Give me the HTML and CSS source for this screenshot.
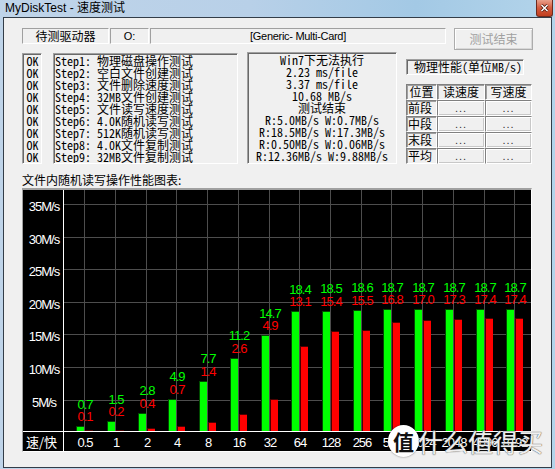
FILE: index.html
```html
<!DOCTYPE html>
<html lang="zh-CN">
<head>
<meta charset="utf-8">
<title>MyDiskTest - 速度测试</title>
<link rel="stylesheet" href="styles.css">
</head>
<body>
<div class="window">
  <div class="titlebar">
    <span class="title">MyDiskTest - 速度测试</span>
    <span class="close"><svg width="9" height="8" viewBox="0 0 9 8"><path d="M1.5 1L7.5 7M7.5 1L1.5 7" stroke="#4a1408" stroke-width="3"/><path d="M1.5 1L7.5 7M7.5 1L1.5 7" stroke="#fff" stroke-width="1.5"/></svg></span>
  </div>
  <div class="client">
    <div class="toprow">
      <div class="static drive">待测驱动器</div>
      <div class="static letter">O:</div>
      <div class="static device">[Generic- Multi-Card]</div>
      <div class="btn">测试结束</div>
    </div>
    <div class="midrow">
      <div class="well oklist">
        <div>OK</div><div>OK</div><div>OK</div><div>OK</div><div>OK</div><div>OK</div><div>OK</div><div>OK</div><div>OK</div>
      </div>
      <div class="well steps">
        <div>Step1: 物理磁盘操作测试</div>
        <div>Step2: 空白文件创建测试</div>
        <div>Step3: 文件删除速度测试</div>
        <div>Step4: 32MB文件创建测试</div>
        <div>Step5: 文件读写速度测试</div>
        <div>Step6: 4.0K随机读写测试</div>
        <div>Step7: 512K随机读写测试</div>
        <div>Step8: 4.0K文件复制测试</div>
        <div>Step9: 32MB文件复制测试</div>
      </div>
      <div class="well results">
        <div>Win7下无法执行</div>
        <div>2.23 ms/file</div>
        <div>3.37 ms/file</div>
        <div>10.68 MB/s</div>
        <div>测试结束</div>
        <div>R:5.0MB/s W:0.7MB/s</div>
        <div>R:18.5MB/s W:17.3MB/s</div>
        <div>R:0.50MB/s W:0.06MB/s</div>
        <div>R:12.36MB/s W:9.88MB/s</div>
      </div>
      <div class="perf">
        <div class="perfcap">物理性能(单位MB/s)</div>
        <div class="ptable">
          <div class="ph">位置</div><div class="ph">读速度</div><div class="ph">写速度</div>
          <div class="pl">前段</div><div class="pd">...</div><div class="pd">...</div>
          <div class="pl">中段</div><div class="pd">...</div><div class="pd">...</div>
          <div class="pl">末段</div><div class="pd">...</div><div class="pd">...</div>
          <div class="pl">平均</div><div class="pd">...</div><div class="pd">...</div>
        </div>
      </div>
    </div>
    <div class="caption">文件内随机读写操作性能图表:</div>
    <div class="chart">
      <svg width="508" height="261" viewBox="0 0 508 261">
        <path class="grid" d="M61.5 0V241M92.5 0V241M123.5 0V241M153.5 0V241M184.5 0V241M215.5 0V241M246.5 0V241M276.5 0V241M307.5 0V241M338.5 0V241M368.5 0V241M399.5 0V241M430.5 0V241M461.5 0V241M491.5 0V241M41 14.5H508M41 47.5H508M41 79.5H508M41 112.5H508M41 144.5H508M41 177.5H508M41 210.5H508"/>
        <g class="gd">
          <rect x="53" y="236" width="8" height="5"/><rect x="84" y="231" width="8" height="10"/><rect x="115" y="223" width="8" height="18"/><rect x="145" y="209" width="8" height="32"/><rect x="176" y="191" width="8" height="50"/><rect x="207" y="168" width="8" height="73"/><rect x="238" y="145" width="8" height="96"/><rect x="268" y="121" width="8" height="120"/><rect x="299" y="121" width="8" height="120"/><rect x="330" y="120" width="8" height="121"/><rect x="360" y="119" width="8" height="122"/><rect x="391" y="119" width="8" height="122"/><rect x="422" y="119" width="8" height="122"/><rect x="453" y="119" width="8" height="122"/><rect x="483" y="119" width="8" height="122"/>
        </g>
        <g class="gb">
          <rect x="54" y="237" width="7" height="4"/><rect x="85" y="232" width="7" height="9"/><rect x="116" y="224" width="7" height="17"/><rect x="146" y="210" width="7" height="31"/><rect x="177" y="192" width="7" height="49"/><rect x="208" y="169" width="7" height="72"/><rect x="239" y="146" width="7" height="95"/><rect x="269" y="122" width="7" height="119"/><rect x="300" y="122" width="7" height="119"/><rect x="331" y="121" width="7" height="120"/><rect x="361" y="120" width="7" height="121"/><rect x="392" y="120" width="7" height="121"/><rect x="423" y="120" width="7" height="121"/><rect x="454" y="120" width="7" height="121"/><rect x="484" y="120" width="7" height="121"/>
        </g>
        <g class="rd">
          <rect x="62" y="240" width="8" height="1"/><rect x="93" y="240" width="8" height="1"/><rect x="124" y="238" width="8" height="3"/><rect x="154" y="236" width="8" height="5"/><rect x="185" y="232" width="8" height="9"/><rect x="216" y="224" width="8" height="17"/><rect x="247" y="209" width="8" height="32"/><rect x="277" y="156" width="8" height="85"/><rect x="308" y="141" width="8" height="100"/><rect x="339" y="140" width="8" height="101"/><rect x="369" y="132" width="8" height="109"/><rect x="400" y="130" width="8" height="111"/><rect x="431" y="129" width="8" height="112"/><rect x="462" y="128" width="8" height="113"/><rect x="492" y="128" width="8" height="113"/>
        </g>
        <g class="rb">
          <rect x="125" y="239" width="7" height="2"/><rect x="155" y="237" width="7" height="4"/><rect x="186" y="233" width="7" height="8"/><rect x="217" y="225" width="7" height="16"/><rect x="248" y="210" width="7" height="31"/><rect x="278" y="157" width="7" height="84"/><rect x="309" y="142" width="7" height="99"/><rect x="340" y="141" width="7" height="100"/><rect x="370" y="133" width="7" height="108"/><rect x="401" y="131" width="7" height="110"/><rect x="432" y="130" width="7" height="111"/><rect x="463" y="129" width="7" height="112"/><rect x="493" y="129" width="7" height="112"/>
        </g>
        <path class="axis" d="M40.5 0V261M0 241.5H508"/>
        <g class="ax">
          <text x="21" y="20.5">35M/s</text>
          <text x="21" y="53.5">30M/s</text>
          <text x="21" y="85.5">25M/s</text>
          <text x="21" y="118.5">20M/s</text>
          <text x="21" y="150.5">15M/s</text>
          <text x="21" y="183.5">10M/s</text>
          <text x="21" y="216.5">5M/s</text>
          <text class="ck" x="18.5" y="256.5">速/快</text>
          <text x="62" y="256.5">0.5</text>
          <text x="93" y="256.5">1</text>
          <text x="124" y="256.5">2</text>
          <text x="154" y="256.5">4</text>
          <text x="185" y="256.5">8</text>
          <text x="216" y="256.5">16</text>
          <text x="247" y="256.5">32</text>
          <text x="277" y="256.5">64</text>
          <text x="308" y="256.5">128</text>
          <text x="339" y="256.5">256</text>
          <text x="369" y="256.5">512</text>
          <text x="400" y="256.5">1024</text>
          <text x="431" y="256.5">2048</text>
          <text x="462" y="256.5">4096</text>
          <text x="492" y="256.5">8192</text>
        </g>
        <g class="gv">
          <text x="62" y="218.7">0.7</text>
          <text x="93" y="213.5">1.5</text>
          <text x="124" y="205">2.8</text>
          <text x="154" y="191.4">4.9</text>
          <text x="185" y="173.2">7.7</text>
          <text x="216" y="150.4">11.2</text>
          <text x="247" y="127.7">14.7</text>
          <text x="277" y="103.6">18.4</text>
          <text x="308" y="103">18.5</text>
          <text x="339" y="102.3">18.6</text>
          <text x="369" y="101.7">18.7</text>
          <text x="400" y="101.7">18.7</text>
          <text x="431" y="101.7">18.7</text>
          <text x="462" y="101.7">18.7</text>
          <text x="492" y="101.7">18.7</text>
        </g>
        <g class="rv">
          <text x="62" y="231.2">0.1</text>
          <text x="93" y="226">0.2</text>
          <text x="124" y="217.5">0.4</text>
          <text x="154" y="203.9">0.7</text>
          <text x="185" y="185.7">1.4</text>
          <text x="216" y="162.9">2.6</text>
          <text x="247" y="140.2">4.9</text>
          <text x="277" y="116.1">13.1</text>
          <text x="308" y="115.5">15.4</text>
          <text x="339" y="114.8">15.5</text>
          <text x="369" y="114.2">16.8</text>
          <text x="400" y="114.2">17.0</text>
          <text x="431" y="114.2">17.3</text>
          <text x="462" y="114.2">17.4</text>
          <text x="492" y="114.2">17.4</text>
        </g>
      </svg>
    </div>
  </div>
  <div class="wm">
    <span class="wm-logo">值</span>
    <span class="wm-text">什么值得买</span>
  </div>
</div>
</body>
</html>
```
FILE: styles.css
```css
* { box-sizing: border-box; }
html, body { margin: 0; padding: 0; }
body {
  width: 555px;
  height: 469px;
  overflow: hidden;
  background: #b4cde4;
  font-family: "Liberation Sans", "Noto Sans CJK SC", sans-serif;
  font-size: 12px;
  color: #000;
}
.window {
  position: relative;
  width: 555px;
  height: 469px;
  display: flex;
  flex-direction: column;
  background: linear-gradient(to right, #bfd4e9 0%, #b8d0e8 45%, #a3c9e5 75%, #b3d4ea 100%);
}
.titlebar {
  height: 17px;
  flex: none;
  display: flex;
  justify-content: space-between;
  align-items: flex-start;
  padding-left: 5px;
}
.title {
  font-family: "Liberation Sans", "Noto Sans CJK SC", sans-serif;
  font-size: 12px;
  line-height: 17px;
  color: #000;
}
.close {
  width: 17px;
  height: 17px;
  margin-right: 2px;
  border: 1px solid #6d2a1e;
  border-top: none;
  border-radius: 0 0 3px 3px;
  background: linear-gradient(#e9a08b, #d45a3d 50%, #c13f1f);
  display: flex;
  align-items: center;
  justify-content: center;
}
.close svg { display: block; }
.client {
  flex: 1;
  margin: 0 3px 1px 3px;
  border: 1px solid #333d48;
  background: #f0f0f0;
  padding: 10px 0 0 18px;
}
.toprow {
  display: flex;
  height: 22px;
}
.static {
  height: 16px;
  border: 1px solid;
  border-color: #a0a0a0 #fff #fff #a0a0a0;
  display: flex;
  align-items: center;
  justify-content: center;
  white-space: nowrap;
  overflow: hidden;
  line-height: 14px;
}
.drive {
  width: 87px;
  margin-right: 1px;
  font-family: "Noto Sans CJK SC", sans-serif;
  font-size: 12px;
}
.letter {
  width: 39px;
  margin-right: 1px;
  font-size: 11px;
}
.device {
  width: 296px;
  margin-right: 8px;
  font-size: 11px;
  letter-spacing: -0.3px;
}
.btn {
  width: 79px;
  height: 22px;
  border: 1px solid #acacac;
  box-shadow: inset 1px 1px 0 #fff, inset -1px -1px 0 #d8d8d8;
  color: #a0a0a0;
  display: flex;
  align-items: center;
  justify-content: center;
  font-family: "Noto Sans CJK SC", sans-serif;
  font-size: 12px;
  line-height: 14px;
}
.midrow {
  display: flex;
  margin-top: 2px;
  height: 112px;
}
.well {
  border: 1px solid;
  border-color: #a0a0a0 #fff #fff #a0a0a0;
  box-shadow: inset 1px 1px 0 #696969;
  font-family: "Noto Sans Mono CJK SC", "Liberation Mono", "Noto Sans CJK SC", monospace;
  font-size: 12px;
  line-height: 12px;
  padding-top: 1px;
  white-space: nowrap;
  overflow: hidden;
}
.well div { height: 12px; }
.oklist {
  width: 20px;
  height: 111px;
  margin-top: 1px;
  margin-right: 11px;
  padding-left: 1px;
  text-align: center;
}
.steps {
  width: 185px;
  height: 111px;
  margin-top: 1px;
  margin-right: 9px;
  padding-left: 1px;
}
.results {
  width: 150px;
  height: 112px;
  margin-right: 9px;
  text-align: center;
}
.perf {
  width: 126px;
  display: flex;
  flex-direction: column;
}
.perfcap {
  margin-top: 7px;
  width: 118px;
  height: 16px;
  border: 1px solid;
  border-color: #a0a0a0 #fff #fff #a0a0a0;
  box-shadow: inset 1px 1px 0 #696969;
  font-family: "Noto Sans Mono CJK SC", "Liberation Mono", "Noto Sans CJK SC", monospace;
  font-size: 12px;
  line-height: 14px;
  padding-left: 7px;
  white-space: nowrap;
  overflow: hidden;
}
.ptable {
  margin-top: 9px;
  display: grid;
  grid-template-columns: 31px 48px 47px;
  grid-auto-rows: 16px;
}
.ptable div {
  border: 1px solid;
  border-color: #808080 #fff #fff #808080;
  box-shadow: inset 1px 1px 0 #a0a0a0;
  font-family: "Noto Sans CJK SC", sans-serif;
  font-size: 12px;
  line-height: 14px;
  white-space: nowrap;
  overflow: hidden;
}
.ptable .ph { text-align: center; }
.ptable .pl { padding-left: 1px; }
.ptable .pd {
  text-align: center;
  font-family: "Liberation Sans", sans-serif;
  font-size: 11px;
  letter-spacing: 1px;
  color: #333;
  box-shadow: inset 1px 1px 0 #fff, inset -1px -1px 0 #c8c8c8;
}
.caption {
  margin-top: 9px;
  height: 14px;
  line-height: 14px;
  font-family: "Noto Sans CJK SC", sans-serif;
  font-size: 12px;
}
.chart {
  margin-top: 1px;
  width: 510px;
  height: 264px;
  border-style: solid;
  border-width: 2px 1px 1px 1px;
  border-color: #a0a0a0 #fff #fff #a0a0a0;
  background: #000;
}
.chart svg { display: block; }
.grid { stroke: #4d4d4d; stroke-width: 1; fill: none; }
.axis { stroke: #fff; stroke-width: 1; fill: none; }
.gd rect { fill: #004a00; }
.gb rect { fill: #00ff00; }
.rd rect { fill: #4a0000; }
.rb rect { fill: #ff0000; }
.chart text {
  font-family: "Liberation Sans", sans-serif;
  font-size: 13px;
  letter-spacing: -1px;
  text-anchor: middle;
}
.chart .ck {
  font-family: "Noto Sans CJK SC", sans-serif;
  letter-spacing: 0;
}
.ax text { fill: #fff; }
.gv text { fill: #00ff00; }
.rv text { fill: #ff0000; }
.wm {
  position: absolute;
  left: 388px;
  top: 425px;
  display: flex;
  align-items: center;
  pointer-events: none;
}
.wm-logo {
  width: 31px;
  height: 32px;
  border-radius: 50%;
  background: #fff;
  color: #111;
  font-family: "Noto Sans CJK SC", sans-serif;
  font-weight: bold;
  font-size: 21px;
  line-height: 32px;
  text-align: center;
  box-shadow: 0 0 2px rgba(0, 0, 0, 0.5);
}
.wm-text {
  margin-left: -1px;
  font-family: "Noto Sans CJK SC", sans-serif;
  font-size: 25px;
  line-height: 30px;
  color: rgba(255, 255, 255, 0.92);
  text-shadow: 0 0 1px #555, 0 0 1px #555;
}
```
